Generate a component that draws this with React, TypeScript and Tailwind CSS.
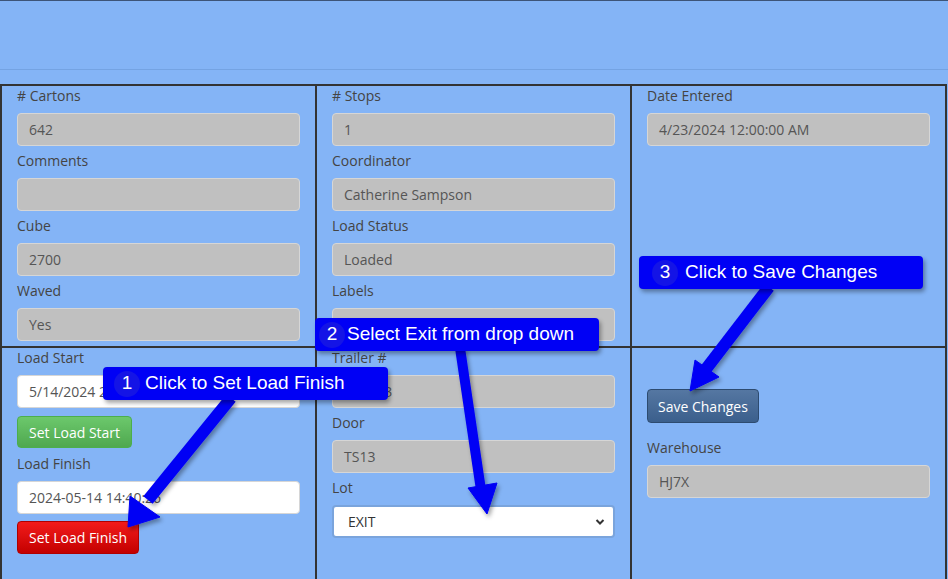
import React from 'react';

const labelCls = 'block h-5 leading-5 text-[14px] text-[#444] mb-[7px]';
const roCls =
  'h-[33px] w-full rounded-[4px] border border-[#d6d6d6] bg-[#c0c0c0] pl-[11px] flex items-center text-[14px] text-[#555]';
const whiteCls =
  'h-[33px] w-full rounded-[4px] border border-[#d6d6d6] bg-white pl-[11px] flex items-center text-[14px] text-[#555]';

function Field({ label, value, last }: { label: string; value: string; last?: boolean }) {
  return (
    <div className={last ? '' : 'mb-[5px]'}>
      <div className={labelCls}>{label}</div>
      <div className={roCls}>{value}</div>
    </div>
  );
}

function Callout({ n, text, className, gap }: { n: string; text: string; className: string; gap: string }) {
  return (
    <div
      className={`absolute h-[33px] rounded-[4px] bg-[#0000f5] flex items-center shadow-[2px_3px_4px_rgba(0,0,0,0.35)] ${className}`}
      style={{ fontFamily: '"Liberation Sans", Arial, sans-serif' }}
    >
      <span className="w-[26px] h-[26px] shrink-0 rounded-full bg-[#1414e6] text-white text-[19px] flex items-center justify-center">
        {n}
      </span>
      <span className={`${gap} text-white text-[19px] whitespace-nowrap`}>{text}</span>
    </div>
  );
}

export default function App() {
  return (
    <div
      className="relative h-[579px] w-[948px] overflow-hidden bg-[#84b4f6]"
      style={{ fontFamily: '"Open Sans", "Noto Sans", sans-serif' }}
    >
      {/* header strip */}
      <div className="h-[70px] border-t border-t-[#3d5478] border-b border-b-[#74a3e3]" />
      <div className="h-[14px]" />

      <div className="grid w-[947px] grid-cols-3 border-l-2 border-t-2 border-[#333]">
        {/* row 1 */}
        <div className="h-[262px] border-r-2 border-b-2 border-[#333] px-[15px]">
          <Field label="# Cartons" value="642" />
          <Field label="Comments" value="" />
          <Field label="Cube" value="2700" />
          <Field label="Waved" value="Yes" />
        </div>
        <div className="h-[262px] border-r-2 border-b-2 border-[#333] px-[15px]">
          <Field label="# Stops" value="1" />
          <Field label="Coordinator" value="Catherine Sampson" />
          <Field label="Load Status" value="Loaded" />
          <Field label="Labels" value="" />
        </div>
        <div className="h-[262px] border-r-2 border-b-2 border-[#333] px-[15px]">
          <Field label="Date Entered" value="4/23/2024 12:00:00 AM" />
        </div>

        {/* row 2 */}
        <div className="h-[240px] border-r-2 border-[#333] px-[15px]">
          <div className={labelCls}>Load Start</div>
          <div className={whiteCls}>5/14/2024 2:40:26 PM</div>
          <button className="mt-[8px] h-[32px] px-[11px] rounded-[4px] border border-[#4cae4c] bg-gradient-to-b from-[#6cc86c] to-[#4fa84f] text-white text-[14px]">
            Set Load Start
          </button>
          <div className={`${labelCls} mt-[6px]`}>Load Finish</div>
          <div className={whiteCls}>2024-05-14 14:40:26</div>
          <button className="mt-[7px] h-[33px] px-[11px] rounded-[4px] border border-[#b00000] bg-gradient-to-b from-[#f21a1a] to-[#c40000] text-white text-[14px]">
            Set Load Finish
          </button>
        </div>
        <div className="h-[240px] border-r-2 border-[#333] px-[15px]">
          <Field label="Trailer #" value="TR1553" />
          <Field label="Door" value="TS13" />
          <div className={labelCls}>Lot</div>
          <div className="h-[33px] w-full rounded-[4px] border-2 border-[#7aa4dc] bg-white pl-[14px] pr-[8px] flex items-center justify-between text-[14px] text-[#333]">
            <span>EXIT</span>
            <svg width="10" height="8" viewBox="0 0 10 8">
              <path d="M1.5 2 L5 5.5 L8.5 2" fill="none" stroke="#333" strokeWidth="2" />
            </svg>
          </div>
        </div>
        <div className="h-[240px] border-r-2 border-[#333] px-[15px]">
          <button className="mt-[41px] h-[34px] px-[10px] rounded-[4px] border border-[#2d4b70] bg-gradient-to-b from-[#5577a2] to-[#3b5f8c] text-white text-[14px]">
            Save Changes
          </button>
          <div className={`${labelCls} mt-[15px]`}>Warehouse</div>
          <div className={roCls}>HJ7X</div>
        </div>
      </div>

      {/* annotation arrows */}
      <svg className="absolute left-0 top-0 pointer-events-none" width="948" height="579">
        <defs>
          <filter id="sh" x="-20%" y="-20%" width="140%" height="140%">
            <feDropShadow dx="2" dy="3" stdDeviation="2" floodColor="#000" floodOpacity="0.35" />
          </filter>
        </defs>
        <g fill="#0000f5" stroke="#0000f5" filter="url(#sh)">
          <line x1="231" y1="398" x2="148" y2="500" strokeWidth="12" />
          <polygon points="130,496 160,517 128,527" strokeWidth="1" />
          <line x1="460" y1="348" x2="481" y2="490" strokeWidth="10" />
          <polygon points="468,488 497,483 487,514" strokeWidth="1" />
          <line x1="769" y1="287" x2="706" y2="369" strokeWidth="12" />
          <polygon points="695,360 719,377 690,391" strokeWidth="1" />
        </g>
      </svg>

      <Callout n="3" text="Click to Save Changes" gap="ml-[7px]" className="left-[639px] top-[256px] w-[284px] pl-[13px]" />
      <Callout n="2" text="Select Exit from drop down" gap="ml-[2px]" className="left-[315px] top-[318px] w-[284px] h-[32px] pl-[4px]" />
      <Callout n="1" text="Click to Set Load Finish" gap="ml-[5px]" className="left-[103px] top-[367px] w-[285px] pl-[11px]" />
    </div>
  );
}
